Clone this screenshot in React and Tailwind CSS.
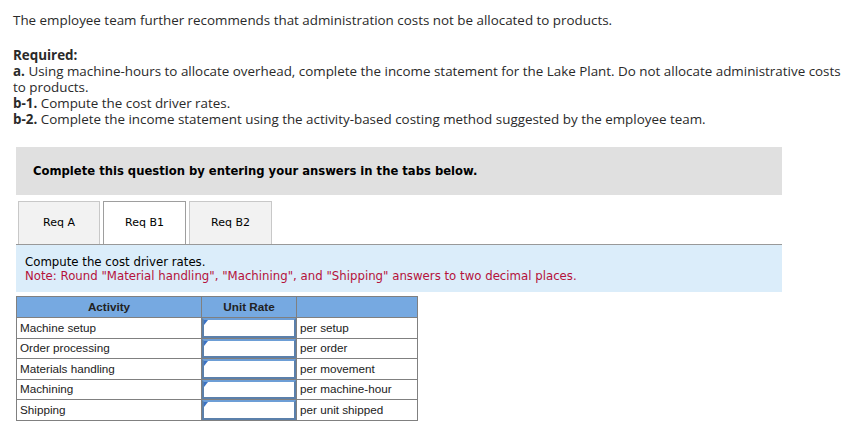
const rows = [
  ["Machine setup", "per setup"],
  ["Order processing", "per order"],
  ["Materials handling", "per movement"],
  ["Machining", "per machine-hour"],
  ["Shipping", "per unit shipped"],
];

const InputCell = () => (
  <td className="border border-[#808080] p-0">
    <div className="relative h-[19.5px] border-2 border-[#5b80ab] border-t-[#6d9ed6] bg-white">
      <span className="absolute left-0 top-0 w-0 h-0 border-t-[5px] border-r-[4px] border-t-[#3a73c6] border-r-transparent" />
    </div>
  </td>
);

export default function App() {
  return (
    <div className="bg-white w-[856px] h-[430px] overflow-hidden text-[#333]">
      <div className="px-[13px] pt-[12px] font-['Open_Sans',sans-serif] text-[13.4px] leading-[16px] text-[#2a2a2a]">
        <p className="whitespace-nowrap">The employee team further recommends that administration costs not be allocated to products.</p>
        <p className="mt-[19px] font-bold">Required:</p>
        <p className="whitespace-nowrap">
          <b>a.</b> Using machine-hours to allocate overhead, complete the income statement for the Lake Plant. Do not allocate administrative costs
          <br />
          to products.
        </p>
        <p>
          <b>b-1.</b> Compute the cost driver rates.
        </p>
        <p>
          <b>b-2.</b> Complete the income statement using the activity-based costing method suggested by the employee team.
        </p>
      </div>

      <div className="ml-[16px] w-[766px] font-['DejaVu_Sans',sans-serif]">
        <div className="mt-[20px] h-[48px] bg-[#e0e0e0] pl-[17px] pt-[11px]">
          <span className="font-bold text-[11.6px] text-black">Complete this question by entering your answers in the tabs below.</span>
        </div>

        <div className="mt-[6px] flex gap-[3px] pl-[2px] h-[43px]">
          <div className="w-[82px] border border-b-0 border-[#c8c8c8] bg-[#f2f2f2] flex items-center justify-center text-[11px] text-black">Req A</div>
          <div className="w-[83px] border border-b-0 border-[#9e9e9e] bg-white flex items-center justify-center text-[11px] text-black">Req B1</div>
          <div className="w-[83px] border border-b-0 border-[#c8c8c8] bg-[#f2f2f2] flex items-center justify-center text-[11px] text-black">Req B2</div>
        </div>

        <div className="border-t border-[#999] bg-[#dbedfa] h-[48px] pl-[9px] pt-[10px] text-[11.75px] leading-[14px]">
          <p className="text-black">Compute the cost driver rates.</p>
          <p className="text-[#b5123a]">Note: Round "Material handling", "Machining", and "Shipping" answers to two decimal places.</p>
        </div>
      </div>

      <table className="ml-[16px] mt-[4px] border-collapse font-['Liberation_Sans',sans-serif] text-[11.7px] text-[#222]">
        <thead>
          <tr className="bg-[#76a9e1] h-[21px]">
            <th className="border border-[#808080] w-[185px] font-bold text-center">Activity</th>
            <th className="border border-[#808080] w-[95px] font-bold text-center">Unit Rate</th>
            <th className="border border-[#808080] w-[121px]"></th>
          </tr>
        </thead>
        <tbody>
          {rows.map(([act, unit]) => (
            <tr key={act}>
              <td className="border border-[#808080] px-[3px] leading-[18px]">{act}</td>
              <InputCell />
              <td className="border border-[#808080] px-[3px] leading-[18px]">{unit}</td>
            </tr>
          ))}
        </tbody>
      </table>
    </div>
  );
}
